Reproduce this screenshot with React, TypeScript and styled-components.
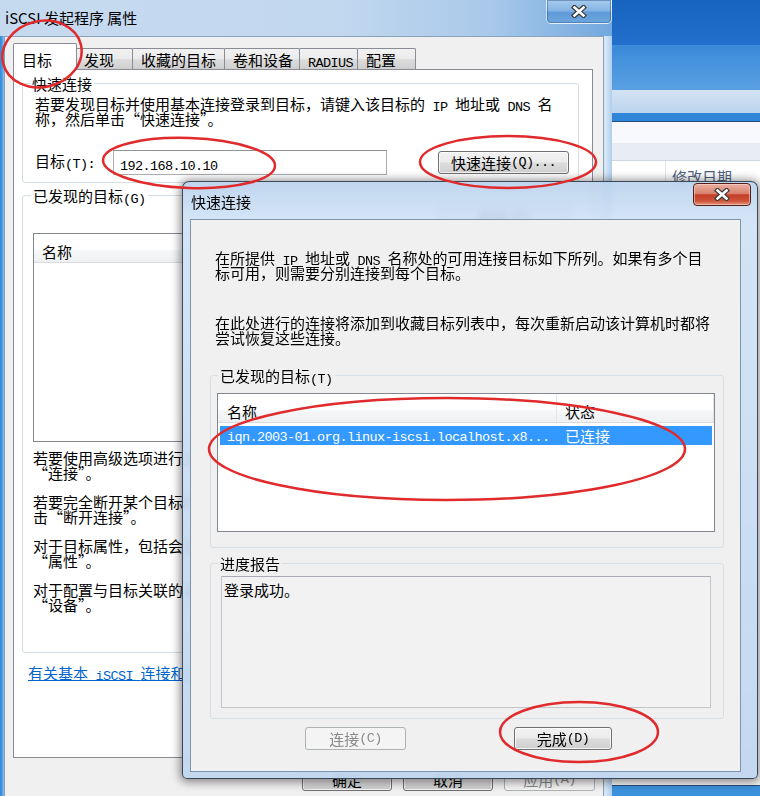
import styled, { createGlobalStyle, css } from 'styled-components';

const CJK = `"Noto Sans CJK SC", "Liberation Sans", sans-serif`;

const GlobalStyle = createGlobalStyle`
    html, body {
        margin: 0;
        padding: 0;
    }
    body {
        width: 760px;
        height: 796px;
        overflow: hidden;
        background: #1d6cc6;
    }
    * {
        box-sizing: border-box;
    }
`;

const Desktop = styled.div`
    position: relative;
    width: 760px;
    height: 796px;
    overflow: hidden;
    font-family: ${CJK};
    font-size: 15px;
    line-height: 15px;
    color: #000;
`;

// SimSun draws latin text half-width, so latin runs get a narrow mono face
const Mono = styled.span`
    font-family: "Liberation Mono", monospace;
    font-size: 13.5px;
    letter-spacing: -0.6px;
    vertical-align: -1px;
`;

const Line = styled.div`
    white-space: nowrap;
    height: 15px;
`;

/* ---------- explorer window peeking out on the right ---------- */

const Explorer = styled.div`
    position: absolute;
    top: 0;
    left: 606px;
    width: 154px;
    height: 796px;
    z-index: 1;
    display: flex;
    flex-direction: column;
    background: #fff;
`;

const Band = styled.div<{ $h: number; $bg: string; $line?: string }>`
    flex: none;
    height: ${p => p.$h}px;
    background: ${p => p.$bg};
    border-bottom: ${p => (p.$line ? `1px solid ${p.$line}` : 'none')};
`;

const ColumnHead = styled.div`
    flex: none;
    height: 22px;
    padding-left: 59px;
    display: flex;
`;

const ColumnCell = styled.div`
    border-left: 1px solid #e2e7ee;
    padding: 8px 0 0 6px;
    color: #4e6283;
    white-space: nowrap;
`;

const Spacer = styled.div`
    flex: 1;
`;

/* ---------- shared win7 controls ---------- */

const PushButton = styled.div<{ $w: number; $h?: number; $disabled?: boolean }>`
    flex: none;
    width: ${p => p.$w}px;
    height: ${p => p.$h ?? 23}px;
    border: 1px solid #707070;
    border-radius: 3px;
    background: linear-gradient(#f2f2f2 0%, #ebebeb 48%, #dddddd 52%, #cfcfcf 100%);
    box-shadow: inset 0 0 0 1px rgba(255, 255, 255, 0.75);
    display: flex;
    align-items: center;
    justify-content: center;
    white-space: nowrap;
    ${p => p.$disabled && css`
        border-color: #adb2b5;
        background: #f4f4f4;
        color: #8a8a8a;
        box-shadow: none;
    `}
`;

const GroupBox = styled.div<{ $h: number; $pad: string }>`
    position: relative;
    flex: none;
    height: ${p => p.$h}px;
    border: 1px solid #d5dfe5;
    border-radius: 3px;
    padding: ${p => p.$pad};
    display: flex;
    flex-direction: column;
`;

const Legend = styled.span<{ $bg: string; $left: number }>`
    position: absolute;
    top: -8px;
    left: ${p => p.$left}px;
    padding: 0 2px;
    background: ${p => p.$bg};
    white-space: nowrap;
`;

const ListView = styled.div<{ $h: number; $w?: number }>`
    flex: none;
    height: ${p => p.$h}px;
    width: ${p => (p.$w ? `${p.$w}px` : 'auto')};
    border: 1px solid #828790;
    background: #fff;
`;

const ListHeader = styled.div<{ $cols: string }>`
    display: grid;
    grid-template-columns: ${p => p.$cols};
    height: 29px;
    background: linear-gradient(#ffffff 0%, #ffffff 55%, #f6f7f8 60%, #eef0f2 100%);
    border-bottom: 1px solid #d9dbde;
`;

const HeadCell = styled.div<{ $pad: number }>`
    padding: 10px 0 0 ${p => p.$pad}px;
    border-right: 1px solid #e3e5e8;
    white-space: nowrap;
`;

const SelectedRow = styled.div<{ $cols: string }>`
    display: grid;
    grid-template-columns: ${p => p.$cols};
    height: 19px;
    margin: 3px 2px 0 2px;
    background: #3399ff;
    color: #fff;
    align-items: center;
`;

const RowCell = styled.div<{ $pad: number }>`
    padding-left: ${p => p.$pad}px;
    white-space: nowrap;
`;

const CloseGlyph = () => (
    <svg width="16" height="13" viewBox="0 0 16 13">
        <path d="M3.5 2.5 L12.5 10.5 M12.5 2.5 L3.5 10.5" stroke="#3a3a3a" strokeWidth="5" strokeLinecap="square" />
        <path d="M3.5 2.5 L12.5 10.5 M12.5 2.5 L3.5 10.5" stroke="#ffffff" strokeWidth="2.6" strokeLinecap="square" />
    </svg>
);

/* ---------- back window: iSCSI 发起程序 属性 ---------- */

const BackWindow = styled.div`
    position: absolute;
    top: 0;
    left: 0;
    width: 612px;
    height: 830px;
    z-index: 2;
    display: flex;
    flex-direction: column;
    background: linear-gradient(to right, #2f86d8 0, #5ea6e6 3px, #a4c9ee 4px, #c4d9ef 8px, #c4d9ef 596px, #d6e7f7 606px, #aecdee 612px);
`;

const BackTitle = styled.div`
    position: relative;
    flex: none;
    height: 36px;
    padding: 10px 0 0 5px;
    white-space: nowrap;
    background: linear-gradient(to right, #c6daef 0%, #c2d8ef 55%, #a9c9ea 80%, #72a8df 100%);
`;

const BackClose = styled.div`
    position: absolute;
    top: -1px;
    right: 0;
    width: 66px;
    height: 25px;
    border: 1px solid rgba(255, 255, 255, 0.7);
    border-radius: 0 0 5px 5px;
    background: linear-gradient(#a7cbee 0%, #86b5e5 45%, #5f9bd9 55%, #6da6de 100%);
    box-shadow: inset 0 0 0 1px rgba(40, 80, 130, 0.45);
    display: flex;
    align-items: center;
    justify-content: center;
`;

const BackClient = styled.div`
    flex: 1;
    margin: 0 8px 0 4px;
    background: #f0f0f0;
    border: 1px solid #8aa1bb;
    border-bottom: none;
    padding: 6px 10px 0 8px;
    display: flex;
    flex-direction: column;
`;

const TabStrip = styled.div`
    position: relative;
    z-index: 1;
    display: flex;
    align-items: flex-end;
    height: 27px;
    margin-bottom: -1px;
`;

const Tab = styled.div<{ $w: number; $active?: boolean }>`
    width: ${p => p.$w}px;
    height: 21px;
    margin-bottom: 1px;
    border: 1px solid #898c95;
    border-bottom: none;
    border-radius: 2px 2px 0 0;
    background: linear-gradient(#f2f2f2 0%, #ebebeb 48%, #dddddd 52%, #cfcfcf 100%);
    padding: 3px 0 0 8px;
    white-space: nowrap;
    & + & {
        margin-left: -1px;
    }
    ${p => p.$active && css`
        height: 27px;
        margin-bottom: 0;
        margin-right: -1px;
        position: relative;
        z-index: 2;
        background: #fff;
        padding-top: 8px;
    `}
`;

const TabPanel = styled.div`
    height: 689px;
    background: #fff;
    border: 1px solid #898c95;
    padding: 13px 13px 0 8px;
    display: flex;
    flex-direction: column;
`;

const InputRow = styled.div`
    display: flex;
    align-items: center;
    margin-top: 24px;
`;

const FieldLabel = styled.div`
    width: 78px;
    white-space: nowrap;
`;

const TextInput = styled.div`
    width: 274px;
    height: 25px;
    border: 1px solid #abadb3;
    border-top-color: #8f9297;
    background: #fff;
    padding: 4px 0 0 6px;
    line-height: 15px;
`;

const Grow = styled.div`
    flex: 1;
`;

const Paragraph = styled.div<{ $gap?: number }>`
    margin-top: ${p => p.$gap ?? 0}px;
`;

const HelpLink = styled.div`
    margin: 12px 0 0 6px;
    color: #0066cc;
    text-decoration: underline;
    white-space: nowrap;
`;

const FooterButtons = styled.div`
    display: flex;
    justify-content: flex-end;
    gap: 11px;
    margin: 10px -2px 0 0;
`;

/* ---------- front dialog: 快速连接 ---------- */

const Dialog = styled.div`
    position: absolute;
    left: 182px;
    top: 181px;
    width: 576px;
    height: 598px;
    z-index: 5;
    border: 1px solid rgba(25, 35, 50, 0.8);
    border-radius: 7px 7px 5px 5px;
    background: linear-gradient(to bottom, rgba(186, 210, 237, 0.9) 0px, rgba(206, 225, 245, 0.9) 37px, rgba(192, 214, 239, 0.94) 100%);
    backdrop-filter: blur(3px);
    box-shadow: 0 1px 10px 2px rgba(0, 0, 0, 0.45);
    padding: 0 16px 6px 7px;
    display: flex;
    flex-direction: column;
`;

const DialogTitle = styled.div`
    flex: none;
    height: 37px;
    padding: 12px 0 0 1px;
    white-space: nowrap;
`;

const DialogClose = styled.div`
    position: absolute;
    top: 1px;
    right: 6px;
    width: 58px;
    height: 23px;
    border: 1px solid #4e2019;
    border-radius: 4px;
    background: linear-gradient(#eab0a3 0%, #d9826f 45%, #c43d28 52%, #cc5238 80%, #e3937a 100%);
    box-shadow: inset 0 0 0 1px rgba(255, 220, 210, 0.55);
    display: flex;
    align-items: center;
    justify-content: center;
`;

const DialogClient = styled.div`
    flex: 1;
    background: #f0f0f0;
    border: 1px solid #8094ab;
    padding: 30px 16px 0 19px;
    display: flex;
    flex-direction: column;
`;

const Intro = styled.div<{ $gap?: number }>`
    padding-left: 5px;
    margin-top: ${p => p.$gap ?? 0}px;
`;

const Spaced = styled.div<{ $gap: number }>`
    margin-top: ${p => p.$gap}px;
`;

const ReportBox = styled.div`
    height: 132px;
    border: 1px solid #c2c6cb;
    border-top-color: #a9adb3;
    background: #f2f2f2;
    padding: 5px 2px;
`;

const DialogButtons = styled.div`
    display: flex;
    gap: 108px;
    margin-top: 8px;
    padding-left: 95px;
`;

/* ---------- red annotation marks ---------- */

const Marks = styled.svg`
    position: absolute;
    top: 0;
    left: 0;
    z-index: 10;
    pointer-events: none;
`;

const marks = [
    { cx: 42, cy: 54, rx: 40, ry: 33, rot: -14 },
    { cx: 189, cy: 163, rx: 86, ry: 25, rot: 2 },
    { cx: 508, cy: 162, rx: 88, ry: 26, rot: 0 },
    { cx: 447, cy: 449, rx: 238, ry: 51, rot: 0 },
    { cx: 579, cy: 732, rx: 79, ry: 30, rot: 0 },
];

const tabs = [
    { label: <>目标</>, w: 64, active: true },
    { label: <>发现</>, w: 58 },
    { label: <>收藏的目标</>, w: 93 },
    { label: <>卷和设备</>, w: 76 },
    { label: <Mono>RADIUS</Mono>, w: 59 },
    { label: <>配置</>, w: 59 },
];

const listCols = '337px 1fr';

export default function App() {
    return (
        <Desktop lang="zh-CN">
            <GlobalStyle />

            <Explorer>
                <Band $h={45} $bg="linear-gradient(#1763c0, #2170cb)" />
                <Band $h={45} $bg="linear-gradient(#3a8ad9, #5aa0e3)" />
                <Band $h={23} $bg="linear-gradient(#d3e3f4, #bcd4ee)" />
                <Band $h={9} $bg="#2f86d8" $line="#274e7a" />
                <Band $h={21} $bg="#f7f9fc" />
                <Band $h={18} $bg="#e8edf4" $line="#cfd6e0" />
                <ColumnHead>
                    <ColumnCell>修改日期</ColumnCell>
                </ColumnHead>
                <Spacer />
                <Band $h={7} $bg="#f4f4f4" $line="#2a4f7a" />
                <Band $h={10} $bg="#3b91db" />
            </Explorer>

            <BackWindow>
                <BackTitle>
                    iSCSI 发起程序 属性
                    <BackClose><CloseGlyph /></BackClose>
                </BackTitle>
                <BackClient>
                    <TabStrip>
                        {tabs.map((t, i) => (
                            <Tab key={i} $w={t.w} $active={t.active}>{t.label}</Tab>
                        ))}
                    </TabStrip>
                    <TabPanel>
                        <GroupBox $h={100} $pad="12px 9px 0 12px">
                            <Legend $bg="#fff" $left={7}>快速连接</Legend>
                            <Line>若要发现目标并使用基本连接登录到目标，请键入该目标的<Mono> IP </Mono>地址或<Mono> DNS </Mono>名</Line>
                            <Line>称，然后单击“快速连接”。</Line>
                            <InputRow>
                                <FieldLabel>目标<Mono>(T):</Mono></FieldLabel>
                                <TextInput><Mono>192.168.10.10</Mono></TextInput>
                                <Grow />
                                <PushButton $w={131} $h={23}>快速连接<Mono>(Q)...</Mono></PushButton>
                            </InputRow>
                        </GroupBox>

                        <Spaced $gap={12}>
                            <GroupBox $h={458} $pad="9px 6px 0 10px">
                                <Legend $bg="#fff" $left={8}>已发现的目标<Mono>(G)</Mono></Legend>
                                <PushButton $w={135} style={{ alignSelf: 'flex-end' }}>刷新<Mono>(R)</Mono></PushButton>
                                <Spaced $gap={5}>
                                    <ListView $h={209} $w={537}>
                                        <ListHeader $cols="1fr">
                                            <HeadCell $pad={8}>名称</HeadCell>
                                        </ListHeader>
                                    </ListView>
                                </Spaced>
                                <Paragraph $gap={8}>
                                    <Line>若要使用高级选项进行连接，请选择目标，然后单击</Line>
                                    <Line>“连接”。</Line>
                                </Paragraph>
                                <Paragraph $gap={14}>
                                    <Line>若要完全断开某个目标的连接，请选择该目标，然后单</Line>
                                    <Line>击“断开连接”。</Line>
                                </Paragraph>
                                <Paragraph $gap={14}>
                                    <Line>对于目标属性，包括会话配置，请选择该目标并单击</Line>
                                    <Line>“属性”。</Line>
                                </Paragraph>
                                <Paragraph $gap={14}>
                                    <Line>对于配置与目标关联的设备，请选择该目标，然后单击</Line>
                                    <Line>“设备”。</Line>
                                </Paragraph>
                            </GroupBox>
                        </Spaced>

                        <HelpLink>有关基本<Mono> iSCSI </Mono>连接和目标的详细信息</HelpLink>
                    </TabPanel>
                    <FooterButtons>
                        <PushButton $w={90}>确定</PushButton>
                        <PushButton $w={90}>取消</PushButton>
                        <PushButton $w={91} $disabled>应用<Mono>(A)</Mono></PushButton>
                    </FooterButtons>
                </BackClient>
            </BackWindow>

            <Dialog>
                <DialogTitle>快速连接</DialogTitle>
                <DialogClose><CloseGlyph /></DialogClose>
                <DialogClient>
                    <Intro>
                        <Line>在所提供<Mono> IP </Mono>地址或<Mono> DNS </Mono>名称处的可用连接目标如下所列。如果有多个目</Line>
                        <Line>标可用，则需要分别连接到每个目标。</Line>
                    </Intro>
                    <Intro $gap={35}>
                        <Line>在此处进行的连接将添加到收藏目标列表中，每次重新启动该计算机时都将</Line>
                        <Line>尝试恢复这些连接。</Line>
                    </Intro>

                    <Spaced $gap={30}>
                        <GroupBox $h={173} $pad="17px 8px 0 6px">
                            <Legend $bg="#f0f0f0" $left={7}>已发现的目标<Mono>(T)</Mono></Legend>
                            <ListView $h={139}>
                                <ListHeader $cols="339px 1fr">
                                    <HeadCell $pad={9}>名称</HeadCell>
                                    <HeadCell $pad={8}>状态</HeadCell>
                                </ListHeader>
                                <SelectedRow $cols={listCols}>
                                    <RowCell $pad={7}><Mono>iqn.2003-01.org.linux-iscsi.localhost.x8...</Mono></RowCell>
                                    <RowCell $pad={8}>已连接</RowCell>
                                </SelectedRow>
                            </ListView>
                        </GroupBox>
                    </Spaced>

                    <Spaced $gap={15}>
                        <GroupBox $h={156} $pad="12px 12px 0 10px">
                            <Legend $bg="#f0f0f0" $left={7}>进度报告</Legend>
                            <ReportBox>登录成功。</ReportBox>
                        </GroupBox>
                    </Spaced>

                    <DialogButtons>
                        <PushButton $w={101} $disabled>连接<Mono>(C)</Mono></PushButton>
                        <PushButton $w={98}>完成<Mono>(D)</Mono></PushButton>
                    </DialogButtons>
                </DialogClient>
            </Dialog>

            <Marks width="760" height="796" viewBox="0 0 760 796">
                {marks.map((m, i) => (
                    <ellipse
                        key={i}
                        cx={m.cx}
                        cy={m.cy}
                        rx={m.rx}
                        ry={m.ry}
                        transform={`rotate(${m.rot} ${m.cx} ${m.cy})`}
                        fill="none"
                        stroke="#e02a2c"
                        strokeWidth="2.5"
                    />
                ))}
            </Marks>
        </Desktop>
    );
}
